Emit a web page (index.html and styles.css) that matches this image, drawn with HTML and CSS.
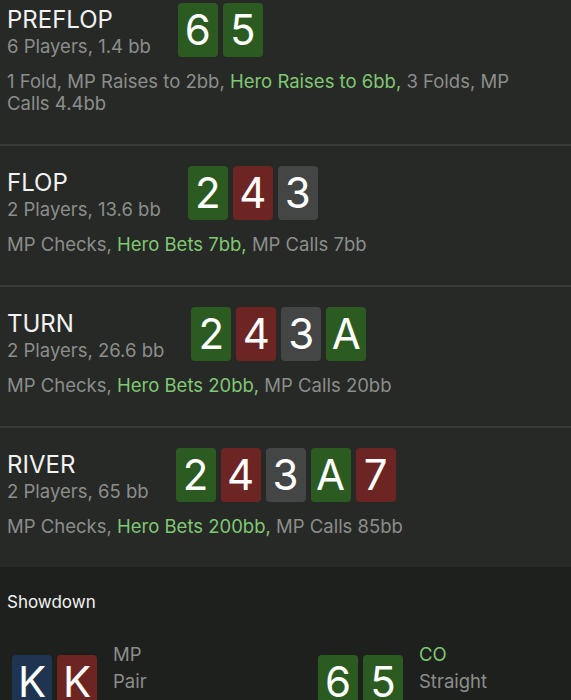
FILE: index.html
```html
<!DOCTYPE html>
<html lang="en">
<head>
    <meta charset="UTF-8">
    <meta name="viewport" content="width=device-width, initial-scale=1.0">
    <title>Hand History</title>
    <link rel="stylesheet" href="styles.css">
</head>
<body>
    <div class="hand-history">
        <div class="street street-first">
            <div class="street-head">
                <div class="street-info">
                    <div class="street-name">PREFLOP</div>
                    <div class="street-pot">6 Players, 1.4 bb</div>
                </div>
                <div class="cards">
                    <div class="card green">6</div>
                    <div class="card green">5</div>
                </div>
            </div>
            <div class="actions">
                1 Fold, MP Raises to 2bb, <span class="hero">Hero Raises to 6bb,</span> 3 Folds, MP Calls 4.4bb
            </div>
        </div>

        <div class="street">
            <div class="street-head">
                <div class="street-info">
                    <div class="street-name">FLOP</div>
                    <div class="street-pot">2 Players, 13.6 bb</div>
                </div>
                <div class="cards">
                    <div class="card green">2</div>
                    <div class="card red">4</div>
                    <div class="card gray">3</div>
                </div>
            </div>
            <div class="actions">
                MP Checks, <span class="hero">Hero Bets 7bb,</span> MP Calls 7bb
            </div>
        </div>

        <div class="street">
            <div class="street-head">
                <div class="street-info">
                    <div class="street-name">TURN</div>
                    <div class="street-pot">2 Players, 26.6 bb</div>
                </div>
                <div class="cards">
                    <div class="card green">2</div>
                    <div class="card red">4</div>
                    <div class="card gray">3</div>
                    <div class="card green">A</div>
                </div>
            </div>
            <div class="actions">
                MP Checks, <span class="hero">Hero Bets 20bb,</span> MP Calls 20bb
            </div>
        </div>

        <div class="street">
            <div class="street-head">
                <div class="street-info">
                    <div class="street-name">RIVER</div>
                    <div class="street-pot">2 Players, 65 bb</div>
                </div>
                <div class="cards">
                    <div class="card green">2</div>
                    <div class="card red">4</div>
                    <div class="card gray">3</div>
                    <div class="card green">A</div>
                    <div class="card red">7</div>
                </div>
            </div>
            <div class="actions">
                MP Checks, <span class="hero">Hero Bets 200bb,</span> MP Calls 85bb
            </div>
        </div>

        <div class="showdown">
            <div class="showdown-title">Showdown</div>
            <div class="players">
                <div class="player">
                    <div class="cards">
                        <div class="card blue">K</div>
                        <div class="card red">K</div>
                    </div>
                    <div class="player-info">
                        <div class="player-pos">MP</div>
                        <div class="player-hand">Pair</div>
                    </div>
                </div>
                <div class="player">
                    <div class="cards">
                        <div class="card green">6</div>
                        <div class="card green">5</div>
                    </div>
                    <div class="player-info">
                        <div class="player-pos hero">CO</div>
                        <div class="player-hand">Straight</div>
                    </div>
                </div>
            </div>
        </div>
    </div>
</body>
</html>
```

FILE: styles.css
```css
body {
    margin: 0;
    background-color: #1e201e;
    font-family: Inter, "Noto Sans", sans-serif;
    color: #8c8e8b;
}
.street {
    background-color: #262926;
    border-top: 2px solid #383b38;
    padding: 20px 7px 30px;
}
.street-first {
    border-top: none;
    padding-top: 3px;
}
.street-head {
    display: flex;
    align-items: center;
    gap: 27px;
    height: 54px;
}
.street-info {
    padding-top: 4px;
}
.street-name {
    font-size: 24px;
    line-height: 28px;
    color: #f2f2f2;
}
.street-pot {
    font-size: 18.5px;
    line-height: 24px;
}
.cards {
    display: flex;
    gap: 5px;
}
.card {
    width: 40px;
    height: 54px;
    border-radius: 4px;
    color: #fff;
    font-size: 42px;
    line-height: 54px;
    text-align: center;
}
.green {
    background-color: #2c5b22;
}
.red {
    background-color: #6c2522;
}
.gray {
    background-color: #444545;
}
.blue {
    background-color: #1e3450;
}
.actions {
    margin-top: 13px;
    padding-right: 30px;
    font-size: 18.5px;
    line-height: 22px;
}
.hero {
    color: #80c873;
}
.showdown {
    padding: 23px 7px 0;
}
.showdown-title {
    font-size: 17px;
    line-height: 24px;
    color: #f2f2f2;
}
.players {
    display: grid;
    grid-template-columns: 306px 1fr;
    padding: 27px 0 0 5px;
}
.player {
    display: flex;
    align-items: flex-start;
    gap: 16px;
}
.player .cards {
    margin-top: 14px;
}
.player-info {
    font-size: 18.5px;
    line-height: 27px;
}
```
